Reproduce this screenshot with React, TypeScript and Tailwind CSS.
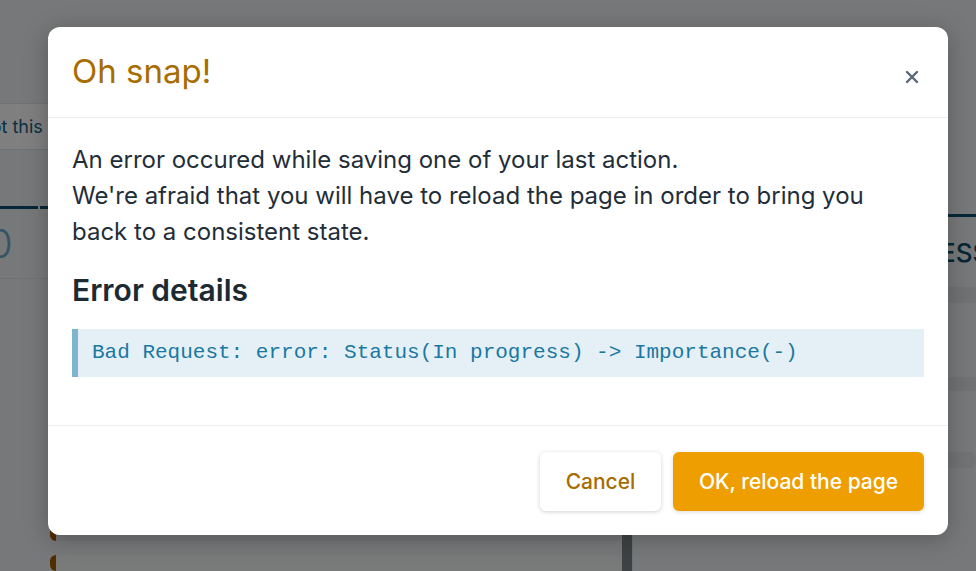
import React from "react";

function BackgroundPage() {
  return (
    <div className="flex h-[571px] w-[976px] flex-col overflow-hidden bg-[#eef1f3] font-['Inter',sans-serif]">
      <div className="flex h-[214px] flex-col">
        <div className="mt-[103px] flex">
          <button className="ml-[-70px] h-[47px] rounded-md border border-[#dfe4e8] bg-white px-4 text-[18px] text-[#135f84]">
            Accept this
          </button>
        </div>
      </div>
      <div className="flex flex-1 gap-0">
        <div className="flex w-[38px] flex-col border-t-[3px] border-[#0d4e6e]">
          <div className="flex h-[70px] items-center border-b border-[#dfe3e7] text-[40px] font-light leading-none text-[#6aa6c4]">
            <span className="ml-[-12px]">0</span>
          </div>
        </div>
        <div className="ml-[2px] flex w-[582px] flex-col border-t-[3px] border-[#0d4e6e]">
          <div className="h-[70px] border-b border-[#dfe3e7]" />
          <div className="mt-[246px] flex flex-col gap-[14px] pl-[10px]">
            <div className="h-[16px] rounded-md border-l-[6px] border-[#a35b00] bg-[#e3e6e8]" />
            <div className="h-[16px] rounded-md border-l-[6px] border-[#a35b00] bg-[#f3f4f5]" />
          </div>
        </div>
        <div className="w-[10px] bg-[#7f8588]" />
        <div className="flex flex-1 flex-col border-l border-[#dfe3e7] pl-[22px]">
          <div className="mt-[246px] h-[16px] rounded-md bg-[#e3e6e8]" />
        </div>
        <div className="absolute right-0 top-[214px] flex w-[30px] flex-col border-t-[3px] border-[#0d4e6e]">
          <div className="flex h-[70px] items-center text-[26px] font-medium text-[#0e4a66]">
            <span className="ml-[-6px]">ESS</span>
          </div>
          <div className="h-[16px] bg-[#e2e5e8]" />
          <div className="mt-[74px] h-[14px] bg-[#e2e5e8]" />
        </div>
      </div>
    </div>
  );
}

function CloseIcon() {
  return (
    <svg width="14" height="14" viewBox="0 0 14 14" fill="none">
      <path d="M2 2L12 12M12 2L2 12" stroke="#5b6675" strokeWidth="2.4" strokeLinecap="round" />
    </svg>
  );
}

export default function App() {
  return (
    <div className="relative h-[571px] w-[976px] overflow-hidden">
      <BackgroundPage />
      <div className="absolute inset-0 flex items-start bg-black/50 pl-[48px] pt-[27px] font-['Inter',sans-serif]">
        <div className="flex w-[900px] flex-col rounded-[12px] bg-white shadow-[0_4px_24px_rgba(0,0,0,0.25)]">
          <div className="flex h-[91px] items-center justify-between border-b border-[#eceef3] pl-[24px] pr-[26px]">
            <h2 className="text-[33px] font-normal text-[#a86d00]">Oh snap!</h2>
            <button className="mt-[10px] flex h-[20px] w-[20px] items-center justify-center">
              <CloseIcon />
            </button>
          </div>
          <div className="flex flex-col px-[24px] pb-[48px] pt-[24px]">
            <p className="text-[24px] leading-[36px] text-[#1f2e39]">
              An error occured while saving one of your last action.
              <br />
              We're afraid that you will have to reload the page in order to bring you back to a consistent state.
            </p>
            <h3 className="mt-[22px] text-[30px] font-semibold leading-[36px] text-[#1b2a33]">Error details</h3>
            <div className="mt-[21px] flex h-[48px] items-center border-l-[6px] border-[#7db4cf] bg-[#e4f0f6] pl-[14px]">
              <code className="font-['Liberation_Mono',monospace] text-[21px] text-[#1a78a2]">
                Bad Request: error: Status(In progress) -&gt; Importance(-)
              </code>
            </div>
          </div>
          <div className="flex justify-end gap-[12px] border-t border-[#eceef1] px-[24px] pb-[24px] pt-[26px]">
            <button className="h-[59px] w-[121px] rounded-[6px] bg-white text-[21px] font-medium text-[#a86d00] shadow-[0_1px_4px_rgba(0,0,0,0.18)]">
              Cancel
            </button>
            <button className="h-[59px] w-[251px] rounded-[6px] bg-[#ef9e00] text-[21px] font-medium text-white shadow-[0_1px_4px_rgba(0,0,0,0.15)]">
              OK, reload the page
            </button>
          </div>
        </div>
      </div>
    </div>
  );
}
